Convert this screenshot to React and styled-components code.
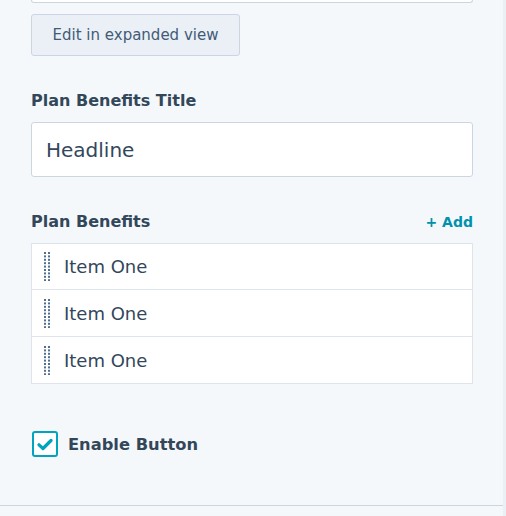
import React from "react";
import styled, { createGlobalStyle } from "styled-components";

const items = ["Item One", "Item One", "Item One"];

function DragHandle() {
  const rows = Array.from({ length: 9 }, (_, i) => i * 3.4);
  return (
    <svg width="6" height="29" viewBox="0 0 6 29">
      {rows.map((y) => (
        <g key={y} fill="#516f90">
          <rect x="0" y={y} width="2" height="2" />
          <rect x="4" y={y} width="2" height="2" />
        </g>
      ))}
    </svg>
  );
}

function App() {
  return (
    <>
      <GlobalStyle />
      <Panel>
        <Content>
          <TopEdge />
          <ExpandButton>Edit in expanded view</ExpandButton>

          <Field>
            <Label>Plan Benefits Title</Label>
            <TextInput defaultValue="Headline" />
          </Field>

          <Field>
            <LabelRow>
              <Label>Plan Benefits</Label>
              <AddLink>+ Add</AddLink>
            </LabelRow>
            <List>
              {items.map((item, i) => (
                <Row key={i}>
                  <DragHandle />
                  <RowText>{item}</RowText>
                </Row>
              ))}
            </List>
          </Field>

          <CheckRow>
            <Box>
              <svg width="16" height="13" viewBox="0 0 16 13">
                <path
                  d="M2 6.8 L6 10.5 L14 2.5"
                  fill="none"
                  stroke="#00a4bd"
                  strokeWidth="3.2"
                  strokeLinecap="round"
                  strokeLinejoin="round"
                />
              </svg>
            </Box>
            <CheckLabel>Enable Button</CheckLabel>
          </CheckRow>
        </Content>
      </Panel>
    </>
  );
}

const GlobalStyle = createGlobalStyle`
  body {
    margin: 0;
    background: #f5f8fa;
    font-family: "DejaVu Sans", "Open Sans", sans-serif;
  }
`;

const Panel = styled.div`
  width: 503px;
  height: 516px;
  border-right: 3px solid #eaf0f6;
  background: #f5f8fa;
  box-sizing: content-box;
`;

const Content = styled.div`
  height: 506px;
  border-bottom: 1px solid #cbd6e2;
  padding: 0 30px 0 31px;
  box-sizing: border-box;
  display: flex;
  flex-direction: column;
`;

const TopEdge = styled.div`
  height: 2px;
  border: 1px solid #cbd6e2;
  border-top: none;
  background: #fff;
  border-radius: 0 0 3px 3px;
`;

const ExpandButton = styled.button`
  align-self: flex-start;
  margin-top: 11px;
  width: 209px;
  height: 42px;
  border: 1px solid #cbd6e2;
  border-radius: 3px;
  background: #eaf0f6;
  color: #425b76;
  font-family: inherit;
  font-size: 15px;
  cursor: pointer;
`;

const Field = styled.div`
  display: flex;
  flex-direction: column;
  margin-top: 34px;

  & + & {
    margin-top: 34px;
  }
`;

const Label = styled.div`
  font-size: 16px;
  font-weight: 700;
  color: #33475b;
  line-height: 22px;
`;

const LabelRow = styled.div`
  display: flex;
  justify-content: space-between;
  align-items: center;
`;

const AddLink = styled.span`
  font-size: 14px;
  font-weight: 700;
  color: #0091ae;
  cursor: pointer;
`;

const TextInput = styled.input`
  margin-top: 10px;
  height: 55px;
  border: 1px solid #cbd6e2;
  border-radius: 3px;
  background: #fff;
  padding: 0 14px;
  font-family: inherit;
  font-size: 20px;
  color: #33475b;
  box-sizing: border-box;
  outline: none;
`;

const List = styled.div`
  margin-top: 10px;
  border: 1px solid #dfe3eb;
  background: #fff;
`;

const Row = styled.div`
  display: flex;
  align-items: center;
  gap: 14px;
  height: 46px;
  padding-left: 12px;
  border-top: 1px solid #dfe3eb;

  &:first-child {
    border-top: none;
    height: 45px;
  }
`;

const RowText = styled.span`
  font-size: 18px;
  color: #33475b;
`;

const CheckRow = styled.label`
  display: flex;
  align-items: center;
  gap: 10px;
  margin-top: 47px;
  margin-left: 1px;
`;

const Box = styled.span`
  width: 22px;
  height: 22px;
  border: 2px solid #00a4bd;
  border-radius: 3px;
  background: #fff;
  display: flex;
  align-items: center;
  justify-content: center;
`;

const CheckLabel = styled.span`
  font-size: 16.3px;
  font-weight: 700;
  color: #33475b;
`;

export default App;
